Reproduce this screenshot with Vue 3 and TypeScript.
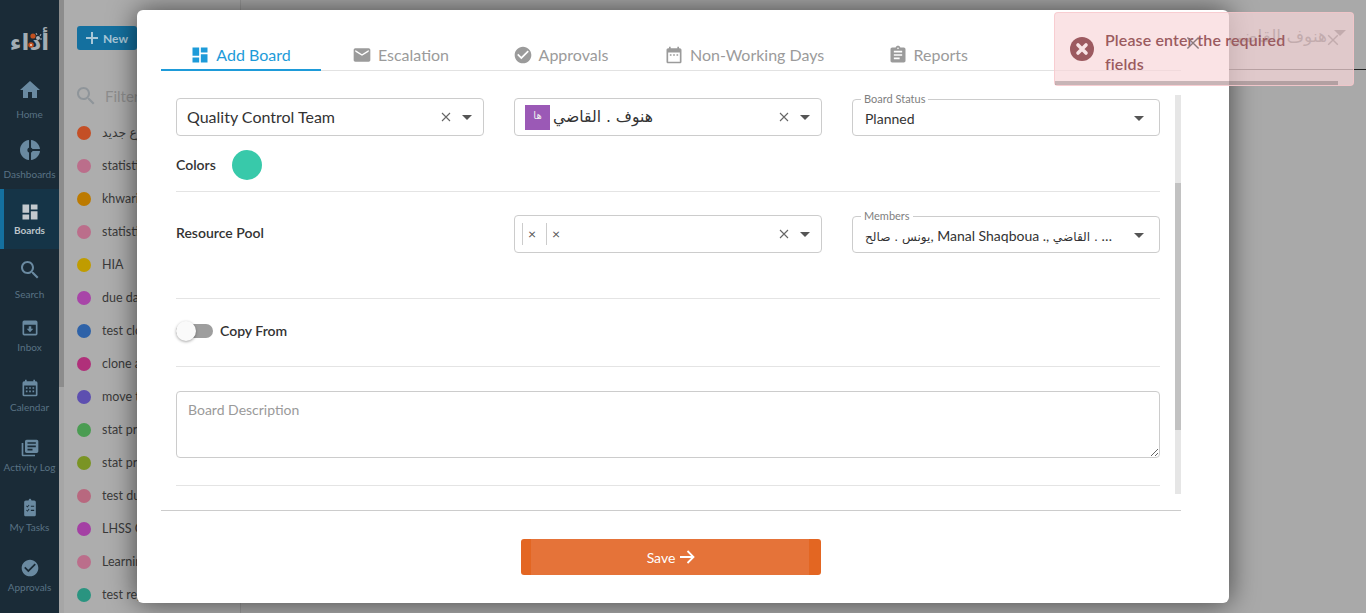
<script setup lang="ts">
interface NavItem { label: string; path: string; size: string; active?: boolean }
interface Tab { label: string; path: string; active?: boolean }
interface Board { name: string; color: string }

const paths = {
  home: 'M10 20v-6h4v6h5v-8h3L12 3 2 12h3v8z',
  pie: 'M11 2v20c-5.07-.5-9-4.79-9-10s3.93-9.5 9-10zm2.03 0v8.99H22c-.47-4.74-4.24-8.52-8.97-8.99zm0 11.01V22c4.74-.47 8.5-4.25 8.97-8.99h-8.97z',
  dashboard: 'M3 13h8V3H3v10zm0 8h8v-6H3v6zm10 0h8V11h-8v10zm0-18v6h8V3h-8z',
  search: 'M15.5 14h-.79l-.28-.27C15.41 12.59 16 11.11 16 9.5 16 5.91 13.09 3 9.5 3S3 5.91 3 9.5 5.91 16 9.5 16c1.61 0 3.09-.59 4.23-1.57l.27.28v.79l5 4.99L20.49 19l-4.99-5zm-6 0C7.01 14 5 11.99 5 9.5S7.01 5 9.5 5 14 7.01 14 9.5 11.99 14 9.5 14z',
  inbox: 'M5 3h14a2 2 0 0 1 2 2v14a2 2 0 0 1-2 2H5a2 2 0 0 1-2-2V5a2 2 0 0 1 2-2zm0 5v11h14V8H5zm7 9-4-4h2.5v-3h3v3H16l-4 4z',
  calendarGrid: 'M19 4h-1V2h-2v2H8V2H6v2H5a2 2 0 0 0-2 2v14a2 2 0 0 0 2 2h14a2 2 0 0 0 2-2V6a2 2 0 0 0-2-2zM5 9h14v11H5V9zm2 2v2h2v-2H7zm4 0v2h2v-2h-2zm4 0v2h2v-2h-2zm-8 4v2h2v-2H7zm4 0v2h2v-2h-2zm4 0v2h2v-2h-2z',
  books: 'M4 6H2v14c0 1.1.9 2 2 2h14v-2H4V6zm16-4H8c-1.1 0-2 .9-2 2v12c0 1.1.9 2 2 2h12c1.1 0 2-.9 2-2V4c0-1.1-.9-2-2-2zm-1 9H9V9h10v2zm-4 4H9v-2h6v2zm4-8H9V5h10v2z',
  tasks: 'M17 3h-3.2C13.4 1.84 12.8 1 12 1s-1.4.84-1.8 2H7c-1.1 0-2 .9-2 2v15c0 1.1.9 2 2 2h10c1.1 0 2-.9 2-2V5c0-1.1-.9-2-2-2zM8 9l1 1 1.5-2 .8.6L9 11.4 7.4 9.8 8 9zm5 .2h4v1.4h-4V9.2zM8 14l1 1 1.5-2 .8.6L9 16.4l-1.600-1.600L8 14zm5 .2h4v1.400h-4v-1.400z',
  check: 'M12 2C6.48 2 2 6.48 2 12s4.48 10 10 10 10-4.48 10-10S17.52 2 12 2zm-2 15l-5-5 1.41-1.41L10 14.17l7.59-7.59L19 8l-9 9z',
  email: 'M20 4H4c-1.1 0-1.99.9-1.99 2L2 18c0 1.1.9 2 2 2h16c1.1 0 2-.9 2-2V6c0-1.1-.9-2-2-2zm0 4l-8 5-8-5V6l8 5 8-5v2z',
  event: 'M9 11H7v2h2v-2zm4 0h-2v2h2v-2zm4 0h-2v2h2v-2zm2-7h-1V2h-2v2H8V2H6v2H5c-1.110 0-1.990.9-1.990 2L3 20c0 1.100.89 2 2 2h14c1.100 0 2-.9 2-2V6c0-1.100-.9-2-2-2zm0 16H5V9h14v11z',
  assignment: 'M19 3h-4.180C14.400 1.840 13.300 1 12 1c-1.300 0-2.400.84-2.820 2H5c-1.100 0-2 .9-2 2v14c0 1.100.9 2 2 2h14c1.100 0 2-.9 2-2V5c0-1.100-.9-2-2-2zm-7 0c.55 0 1 .45 1 1s-.45 1-1 1-1-.45-1-1 .45-1 1-1zm2 14H7v-2h7v2zm3-4H7v-2h10v2zm0-4H7V7h10v2z',
}

const navItems: NavItem[] = [
  { label: 'Home', path: paths.home, size: 'wide' },
  { label: 'Dashboards', path: paths.pie, size: 'wide hub' },
  { label: 'Boards', path: paths.dashboard, size: 'compact', active: true },
  { label: 'Search', path: paths.search, size: 'wide' },
  { label: 'Inbox', path: paths.inbox, size: 'small' },
  { label: 'Calendar', path: paths.calendarGrid, size: 'small' },
  { label: 'Activity Log', path: paths.books, size: 'small' },
  { label: 'My Tasks', path: paths.tasks, size: 'small' },
  { label: 'Approvals', path: paths.check, size: 'small' },
]

const boards: Board[] = [
  { name: 'موضوع جديد', color: '#c44f26' },
  { name: 'statistics', color: '#bb6e8b' },
  { name: 'khwarizmi', color: '#bc7a00' },
  { name: 'statistics 2', color: '#bb6e8b' },
  { name: 'HIA', color: '#c09c00' },
  { name: 'due date', color: '#a845a8' },
  { name: 'test clone', color: '#2e62a8' },
  { name: 'clone a', color: '#b0307a' },
  { name: 'move to', color: '#5d4fb0' },
  { name: 'stat project', color: '#4a9c52' },
  { name: 'stat project 2', color: '#7a9424' },
  { name: 'test due', color: '#b8687f' },
  { name: 'LHSS Committee', color: '#a440a4' },
  { name: 'Learning', color: '#bb6e8b' },
  { name: 'test report', color: '#2a9480' },
]

const tabs: Tab[] = [
  { label: 'Add Board', path: paths.dashboard, active: true },
  { label: 'Escalation', path: paths.email },
  { label: 'Approvals', path: paths.check },
  { label: 'Non-Working Days', path: paths.event },
  { label: 'Reports', path: paths.assignment },
]

const crossPath = 'M1 1l8 8M9 1L1 9'
</script>

<template>
  <div class="page">
    <aside class="nav">
      <div class="logo">
        <span class="logo-text">أداء</span>
        <svg class="logo-dots" width="24" height="28" viewBox="0 0 24 28">
          <circle cx="9" cy="12" r="2.600" fill="#c2501f" />
          <circle cx="7" cy="21" r="2.800" fill="#c2501f" />
          <circle cx="7" cy="21" r="1.100" fill="#e8d8c8" />
          <circle cx="14" cy="14" r="2" fill="#a9b2b8" />
          <path d="M12 9l1 2M17 10l-1 2M18 15h-2" stroke="#a9b2b8" stroke-width="1" />
        </svg>
      </div>
      <div
        v-for="item in navItems"
        :key="item.label"
        class="nav-item"
        :class="[item.size, { active: item.active }]"
      >
        <svg class="nav-icon" viewBox="0 0 24 24">
          <path :d="item.path" fill-rule="evenodd" />
          <circle v-if="item.size.includes('hub')" class="hub" cx="12" cy="12" r="2.600" />
        </svg>
        <span class="nav-label">{{ item.label }}</span>
      </div>
    </aside>
    <div class="side-scroll"><div class="side-thumb"></div></div>
    <section class="list">
      <div class="new-btn">
        <svg width="14" height="14" viewBox="0 0 14 14"><path d="M7 1v12M1 7h12" stroke="#a9c8d8" stroke-width="2" /></svg>
        <span>New</span>
      </div>
      <div class="filter">
        <svg width="24" height="24" viewBox="0 0 24 24"><path :d="paths.search" fill="#8f959a" /></svg>
        <span>Filter</span>
      </div>
      <div v-for="board in boards" :key="board.name" class="board-row">
        <span class="dot" :style="{ background: board.color }"></span>
        <span class="board-name">{{ board.name }}</span>
      </div>
    </section>
    <main class="main">
      <header class="main-head">
        <span class="ghost-name">هنوف القاضي</span>
        <svg class="ghost-x" width="12" height="12" viewBox="0 0 10 10"><path :d="crossPath" stroke="#444" stroke-width="1.200" fill="none" /></svg>
        <span class="ghost-arrow"></span>
      </header>
    </main>

    <div class="modal">
      <nav class="tabs">
        <div v-for="tab in tabs" :key="tab.label" class="tab" :class="{ active: tab.active }">
          <svg class="tab-icon" viewBox="0 0 24 24"><path :d="tab.path" /></svg>
          <span>{{ tab.label }}</span>
        </div>
      </nav>

      <div class="scroll-area">
        <div class="form">
          <div class="grid">
            <div class="select">
              <span class="value">Quality Control Team</span>
              <svg class="clear" width="10" height="10" viewBox="0 0 10 10"><path :d="crossPath" /></svg>
              <span class="caret"></span>
            </div>
            <div class="select">
              <span class="avatar">ها</span>
              <span class="value arabic">هنوف . القاضي</span>
              <svg class="clear" width="10" height="10" viewBox="0 0 10 10"><path :d="crossPath" /></svg>
              <span class="caret"></span>
            </div>
            <div class="outlined">
              <span class="legend">Board Status</span>
              <span class="outlined-value">Planned</span>
              <span class="caret"></span>
            </div>
          </div>

          <div class="colors">
            <span class="field-label colors-label">Colors</span>
            <span class="swatch"></span>
          </div>
          <hr class="divider after-colors" />

          <div class="grid resource">
            <span class="field-label">Resource Pool</span>
            <div class="select tags">
              <span class="tag">×</span>
              <span class="tag">×</span>
              <span class="value"></span>
              <svg class="clear" width="10" height="10" viewBox="0 0 10 10"><path :d="crossPath" /></svg>
              <span class="caret"></span>
            </div>
            <div class="outlined">
              <span class="legend">Members</span>
              <span class="outlined-value"><span class="ar-small">يونس . صالح</span>, Manal Shaqboua ., <span class="ar-small">هنوف . القاضي</span></span>
              <span class="caret"></span>
            </div>
          </div>
          <hr class="divider after-resource" />

          <div class="copy-row">
            <span class="toggle"><span class="knob"></span></span>
            <span class="field-label">Copy From</span>
          </div>
          <hr class="divider after-copy" />

          <textarea class="description" placeholder="Board Description"></textarea>
          <hr class="divider after-desc" />
        </div>
        <div class="track"><div class="thumb"></div></div>
      </div>

      <div class="footer">
        <button class="save" type="button">
          <span>Save</span>
          <svg width="16" height="16" viewBox="0 0 16 16"><path d="M1 8h13M8.500 2l6 6-6 6" stroke="#fff" stroke-width="1.800" fill="none" /></svg>
        </button>
      </div>
    </div>

    <div class="toast">
      <svg class="toast-icon" width="24" height="24" viewBox="0 0 24 24">
        <circle cx="12" cy="12" r="12" fill="#9c5a60" />
        <path d="M8 8l8 8M16 8l-8 8" stroke="#f8e3e5" stroke-width="3.600" stroke-linecap="round" />
      </svg>
      <p class="toast-text">Please enter the required fields</p>
      <svg class="toast-ghost" width="14" height="14" viewBox="0 0 10 10"><path :d="crossPath" stroke="#8c7a7c" stroke-width="1" fill="none" /></svg>
      <div class="toast-bar"></div>
    </div>
  </div>
</template>

<style>
html, body { margin: 0; padding: 0; }
</style>

<style scoped>
.page {
  position: relative;
  display: flex;
  width: 1366px;
  height: 613px;
  overflow: hidden;
  background: #a9a9a9;
  font-family: Lato, "Noto Sans", "DejaVu Sans", sans-serif;
  color: #333;
}

/* left navigation */
.nav {
  flex: 0 0 59px;
  display: flex;
  flex-direction: column;
  background: #1a2b37;
}
.logo {
  position: relative;
  flex: 0 0 69px;
  box-sizing: border-box;
  display: flex;
  align-items: center;
  justify-content: center;
  padding-top: 14px;
}
.logo-text {
  font-family: "DejaVu Sans", sans-serif;
  font-weight: 700;
  font-size: 23px;
  color: #a2adb3;
  letter-spacing: 1px;
}
.logo-dots {
  position: absolute;
  left: 24px;
  top: 24px;
}
.nav-item {
  flex: 0 0 60px;
  box-sizing: border-box;
  display: flex;
  flex-direction: column;
  align-items: center;
  padding-top: 9px;
}
.nav-icon {
  width: 24px;
  height: 24px;
  fill: #6a8aa1;
}
.hub { fill: #1a2b37; }
.nav-label {
  font-size: 10px;
  line-height: 14px;
  margin-top: 5px;
  color: #597284;
  white-space: nowrap;
}
.nav-item.small .nav-icon,
.nav-item.compact .nav-icon {
  width: 20px;
  height: 20px;
}
.nav-item.small .nav-label { margin-top: 2px; }
.nav-item.compact {
  padding-top: 13px;
  background: #153447;
  border-left: 4px solid #14709f;
  padding-right: 4px;
}
.nav-item.compact .nav-icon { fill: #c3c9ce; }
.nav-item.compact .nav-label {
  margin-top: 1px;
  color: #bcc4c9;
  font-weight: 700;
}

.side-scroll {
  flex: 0 0 5px;
  background: #a6a6a6;
}
.side-thumb {
  height: 387px;
  background: #8c8c8c;
}

/* board list */
.list {
  flex: 0 0 177px;
  box-sizing: border-box;
  padding: 26px 0 0 13px;
  background: #adadad;
  border-right: 1px solid #999;
  overflow: hidden;
}
.new-btn {
  display: flex;
  align-items: center;
  gap: 4px;
  box-sizing: border-box;
  width: 60px;
  height: 24px;
  padding-left: 8px;
  border-radius: 3px;
  background: #14709f;
  color: #a9c8d8;
  font-size: 12px;
  font-weight: 700;
}
.filter {
  display: flex;
  align-items: center;
  gap: 7px;
  margin: 34px 0 0 -3px;
  height: 24px;
  font-size: 15px;
  color: #8d8d8d;
}
.board-row {
  display: flex;
  align-items: center;
  height: 33px;
  white-space: nowrap;
}
.filter + .board-row { margin-top: 8px; }
.dot {
  flex: 0 0 14px;
  height: 14px;
  border-radius: 50%;
}
.board-name {
  margin-left: 11px;
  font-size: 12.500px;
  color: #3a3a3a;
}

.main {
  flex: 1;
  min-width: 0;
}
.main-head {
  display: flex;
  justify-content: flex-end;
  align-items: flex-start;
  box-sizing: border-box;
  height: 70px;
  padding: 25px 20px 0 0;
  border-bottom: 1px solid #222;
}
.ghost-name {
  font-family: "DejaVu Sans", sans-serif;
  font-size: 17px;
  line-height: 22px;
  color: #444;
}
.ghost-x { margin: 9px 0 0 0; }
.ghost-arrow {
  width: 0;
  height: 0;
  margin: 5px 0 0 -5px;
  border-left: 6px solid transparent;
  border-right: 6px solid transparent;
  border-top: 6px solid #444;
}

/* modal */
.modal {
  position: absolute;
  left: 137px;
  top: 10px;
  box-sizing: border-box;
  display: flex;
  flex-direction: column;
  width: 1092px;
  height: 593px;
  padding: 26px 48px 0 24px;
  background: #fff;
  border-radius: 6px;
  box-shadow: 0 0 28px rgba(0, 0, 0, 0.6);
}
.tabs {
  display: flex;
  height: 35px;
  box-sizing: border-box;
  border-bottom: 1px solid #e2e2e2;
}
.tab {
  display: flex;
  align-items: center;
  justify-content: center;
  gap: 7px;
  box-sizing: border-box;
  min-width: 160px;
  height: 35px;
  padding: 2px 24px 0;
  font-size: 16px;
  color: #9b9b9b;
  white-space: nowrap;
}
.tab.active {
  padding-top: 4px;
  color: #1e9bd9;
  border-bottom: 2px solid #1e9bd9;
}
.tab-icon {
  width: 20px;
  height: 20px;
  margin: 0 -1px;
  fill: #9b9b9b;
}
.tab.active .tab-icon { fill: #1e9bd9; }

.scroll-area {
  display: flex;
  height: 399px;
  margin-top: 24px;
}
.form {
  flex: 1;
  min-width: 0;
  padding: 3px 15px 0;
}
.track {
  flex: 0 0 6px;
  background: #e6e6e6;
}
.thumb {
  height: 247px;
  margin-top: 88px;
  background: #c2c2c2;
}
.grid {
  display: grid;
  grid-template-columns: repeat(3, 308px);
  column-gap: 30px;
}
.select {
  display: flex;
  align-items: center;
  box-sizing: border-box;
  height: 38px;
  padding: 0 11px 0 10px;
  border: 1px solid #ccc;
  border-radius: 4px;
  background: #fff;
}
.value {
  flex: 1;
  min-width: 0;
  padding-bottom: 2px;
  font-size: 16px;
  color: #333;
  white-space: nowrap;
}
.arabic {
  margin-left: 3px;
  padding-bottom: 0;
  font-family: "DejaVu Sans", sans-serif;
  font-size: 15.600px;
}
.avatar {
  flex: 0 0 25px;
  height: 25px;
  line-height: 22px;
  text-align: center;
  background: #9b59b6;
  color: #eee;
  font-family: "DejaVu Sans", sans-serif;
  font-size: 10px;
}
.clear {
  flex: none;
  stroke: #666;
  stroke-width: 1.100;
  fill: none;
}
.caret {
  flex: none;
  width: 0;
  height: 0;
  margin-left: 11px;
  border-left: 5.500px solid transparent;
  border-right: 5.500px solid transparent;
  border-top: 5.500px solid #555;
}
.outlined {
  position: relative;
  display: flex;
  align-items: center;
  box-sizing: border-box;
  height: 37px;
  margin-top: 1px;
  padding: 1px 15px 0 12px;
  border: 1px solid #ccc;
  border-radius: 4px;
}
.legend {
  position: absolute;
  left: 8px;
  top: -7px;
  padding: 0 3px;
  background: #fff;
  font-size: 11px;
  line-height: 12px;
  color: #808080;
}
.outlined-value {
  flex: 1;
  min-width: 0;
  font-size: 14px;
  color: #333;
  white-space: nowrap;
  overflow: hidden;
  text-overflow: ellipsis;
}
.ar-small {
  font-family: "DejaVu Sans", sans-serif;
  font-size: 12.100px;
}
.field-label {
  padding-bottom: 2px;
  font-size: 14px;
  font-weight: 600;
  color: #333;
  white-space: nowrap;
}
.colors {
  display: flex;
  align-items: center;
  margin-top: 14px;
}
.colors-label { width: 56px; }
.swatch {
  width: 30px;
  height: 30px;
  border-radius: 50%;
  background: #38c9aa;
}
.divider {
  margin: 0;
  height: 1px;
  border: 0;
  background: #e4e4e4;
}
.after-colors { margin-top: 11px; }
.resource {
  margin-top: 23px;
  align-items: center;
}
.resource .field-label { padding-bottom: 4px; }
.tags { padding-left: 7px; }
.tag {
  box-sizing: border-box;
  width: 24px;
  height: 22px;
  padding-left: 5px;
  line-height: 21px;
  border-left: 1px solid #ccc;
  font-size: 14px;
  color: #555;
}
.after-resource { margin-top: 45px; }
.copy-row {
  display: flex;
  align-items: center;
  gap: 7px;
  height: 24px;
  margin-top: 20px;
}
.toggle {
  position: relative;
  display: block;
  width: 37px;
  height: 14px;
  border-radius: 7px;
  background: #9e9e9e;
}
.knob {
  position: absolute;
  left: 0;
  top: -3px;
  width: 20px;
  height: 20px;
  border-radius: 50%;
  background: #fafafa;
  box-shadow: 0 1px 3px rgba(0, 0, 0, 0.35);
}
.after-copy { margin-top: 23px; }
.description {
  display: block;
  box-sizing: border-box;
  width: 100%;
  height: 67px;
  margin-top: 24px;
  padding: 9px 11px;
  border: 1px solid #ccc;
  border-radius: 4px;
  font-family: Lato, sans-serif;
  font-size: 14px;
  outline: none;
}
.description::placeholder { color: #9a9a9a; }
.after-desc { margin-top: 27px; }

.footer {
  display: flex;
  justify-content: center;
  margin-top: 16px;
  padding-top: 28px;
  border-top: 1px solid #ccc;
}
.save {
  display: flex;
  align-items: center;
  justify-content: center;
  gap: 4px;
  width: 300px;
  height: 36px;
  border: 0;
  border-radius: 3px;
  background: linear-gradient(90deg, #e36622 0 10px, #e57339 10px calc(100% - 12px), #e36622 calc(100% - 12px));
  color: #fff;
  font-family: Lato, sans-serif;
  font-size: 14px;
}

/* toast */
.toast {
  position: absolute;
  left: 1054px;
  top: 12px;
  box-sizing: border-box;
  width: 300px;
  height: 74px;
  padding: 15px 50px 0 50px;
  background: rgba(248, 215, 218, 0.7);
  border: 1px solid rgba(246, 195, 200, 0.7);
  border-radius: 4px;
}
.toast-icon {
  position: absolute;
  left: 15px;
  top: 24px;
}
.toast-text {
  margin: 0;
  font-size: 16px;
  font-weight: 600;
  letter-spacing: 0.12px;
  line-height: 24px;
  color: #9a5b5f;
}
.toast-ghost {
  position: absolute;
  left: 131px;
  top: 23px;
}
.toast-bar {
  position: absolute;
  left: 0;
  bottom: 0;
  width: 283px;
  height: 4px;
  background: rgba(0, 0, 0, 0.2);
}
</style>
